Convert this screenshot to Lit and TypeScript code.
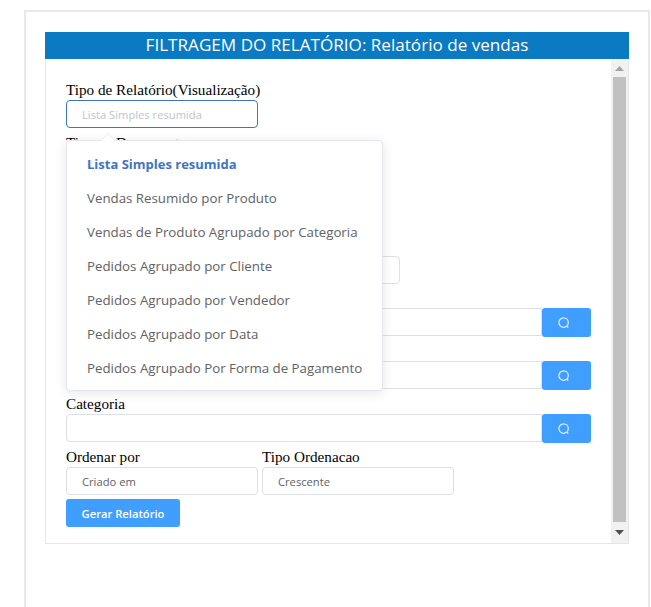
import { LitElement, html, css } from 'lit';
import { customElement } from 'lit/decorators.js';

const OPTIONS = [
  'Lista Simples resumida',
  'Vendas Resumido por Produto',
  'Vendas de Produto Agrupado por Categoria',
  'Pedidos Agrupado por Cliente',
  'Pedidos Agrupado por Vendedor',
  'Pedidos Agrupado por Data',
  'Pedidos Agrupado Por Forma de Pagamento',
];

const searchIcon = html`<svg width="14" height="14" viewBox="0 0 14 14" fill="none" stroke="#e3f0ff" stroke-width="1.2">
  <circle cx="6.6" cy="6.6" r="4.7"></circle>
  <path d="M9.9 10l1.3 1.6"></path>
</svg>`;

@customElement('app-root')
export class AppRoot extends LitElement {
  static styles = css`
    :host {
      display: block;
      height: 607px;
      overflow: hidden;
      background: #fff;
      padding: 10px 1px 0 24px;
      box-sizing: border-box;
    }
    .sheet {
      border: 2px solid #e8e8ee;
      border-bottom: 0;
      height: 620px;
      padding: 20px 19px 0 19px;
      box-sizing: border-box;
    }
    .panel {
      width: 584px;
      height: 512px;
      box-sizing: border-box;
      border: 1px solid #e6e6e6;
      border-top: 0;
      position: relative;
    }
    .title {
      margin: 0 -1px;
      height: 27px;
      background: #0a7ac2;
      color: #fff;
      text-align: center;
      font: 17.1px/26px 'Open Sans', sans-serif;
    }
    .body {
      display: flex;
      height: 484px;
    }
    .form {
      flex: 1;
      padding: 22px 20px 0 20px;
      position: relative;
    }
    .scrollbar {
      width: 17px;
      background: #f1f1f1;
      display: flex;
      flex-direction: column;
      align-items: center;
    }
    .arrow {
      height: 18px;
      flex: none;
      display: flex;
      align-items: center;
      justify-content: center;
    }
    .arrow.down {
      height: 21px;
    }
    .thumb {
      flex: 1;
      width: 13px;
      background: #c1c1c1;
    }
    label {
      display: block;
      font: 15.2px/18px 'Liberation Serif', serif;
      color: #000;
      height: 18px;
      margin-bottom: 1px;
    }
    .field {
      height: 28px;
      box-sizing: border-box;
      border: 1px solid #dcdfe6;
      border-radius: 4px;
      padding: 0 15px;
      background: #fff;
      font: 11.2px/28px 'Open Sans', sans-serif;
      color: #606266;
      width: 192px;
    }
    .field.open {
      border-color: #3a77c0;
      color: #c0c4cc;
    }
    .field.mid { width: 334px; }
    .group { margin-bottom: 6px; }
    .group.tight { margin-bottom: 4px; }
    .group.snug { margin-bottom: 5px; }
    .line {
      display: flex;
      width: 525px;
      height: 28px;
    }
    .line .field {
      flex: 1;
      border-radius: 4px 0 0 4px;
    }
    .search {
      width: 49px;
      height: 29px;
      flex: none;
      box-sizing: border-box;
      padding-right: 5px;
      background: #409eff;
      border-radius: 3px;
      display: flex;
      align-items: center;
      justify-content: center;
    }
    .pair {
      display: flex;
      gap: 4px;
    }
    .submit {
      display: block;
      width: 114px;
      height: 28px;
      border: 0;
      border-radius: 3px;
      margin-top: 4px;
      background: #409eff;
      color: #fff;
      font: 600 11.2px 'Open Sans', sans-serif;
      padding: 0;
    }
    .menu {
      position: absolute;
      left: 20px;
      top: 81px;
      width: 317px;
      height: 251px;
      box-sizing: border-box;
      background: #fff;
      border: 1px solid #e4e7ed;
      border-radius: 4px;
      box-shadow: 0 2px 12px 0 rgba(0, 0, 0, 0.1);
      padding: 6px 0;
    }
    .menu::before {
      content: '';
      position: absolute;
      left: 36px;
      top: -6px;
      width: 9px;
      height: 9px;
      background: #fff;
      transform: rotate(45deg);
      border-left: 1px solid #eef0f4;
      border-top: 1px solid #eef0f4;
    }
    .item {
      height: 34px;
      line-height: 34px;
      padding: 0 20px;
      font-family: 'Open Sans', sans-serif;
      font-size: 13.3px;
      color: #606266;
      white-space: nowrap;
      position: relative;
    }
    .item.selected {
      color: #3f74c0;
      font-size: 13px;
      font-weight: 700;
    }
  `;

  render() {
    return html`
      <div class="sheet">
        <div class="panel">
          <div class="title">FILTRAGEM DO RELATÓRIO: Relatório de vendas</div>
          <div class="body">
            <div class="form">
              <div class="group">
                <label>Tipo de Relatório(Visualização)</label>
                <div class="field open">Lista Simples resumida</div>
              </div>
              <div class="group tight">
                <label>Tipo de Documento</label>
                <div class="field"></div>
              </div>
              <div class="group snug">
                <label></label>
                <div class="field"></div>
              </div>
              <div class="group snug">
                <label></label>
                <div class="field mid"></div>
              </div>
              <div class="group">
                <label></label>
                <div class="line"><div class="field"></div><div class="search">${searchIcon}</div></div>
              </div>
              <div class="group">
                <label>&nbsp;</label>
                <div class="line"><div class="field"></div><div class="search">${searchIcon}</div></div>
              </div>
              <div class="group">
                <label>Categoria</label>
                <div class="line"><div class="field"></div><div class="search">${searchIcon}</div></div>
              </div>
              <div class="pair">
                <div>
                  <label>Ordenar por</label>
                  <div class="field">Criado em</div>
                </div>
                <div>
                  <label>Tipo Ordenacao</label>
                  <div class="field">Crescente</div>
                </div>
              </div>
              <button class="submit">Gerar Relatório</button>
              <div class="menu">
                ${OPTIONS.map(
                  (o, i) => html`<div class="item ${i === 0 ? 'selected' : ''}">${o}</div>`
                )}
              </div>
            </div>
            <div class="scrollbar">
              <div class="arrow">
                <svg width="9" height="5" viewBox="0 0 9 5"><path d="M0 5L4.5 0L9 5z" fill="#a3a3a3"></path></svg>
              </div>
              <div class="thumb"></div>
              <div class="arrow down">
                <svg width="9" height="5" viewBox="0 0 9 5"><path d="M0 0L4.5 5L9 0z" fill="#505050"></path></svg>
              </div>
            </div>
          </div>
        </div>
      </div>
    `;
  }
}
